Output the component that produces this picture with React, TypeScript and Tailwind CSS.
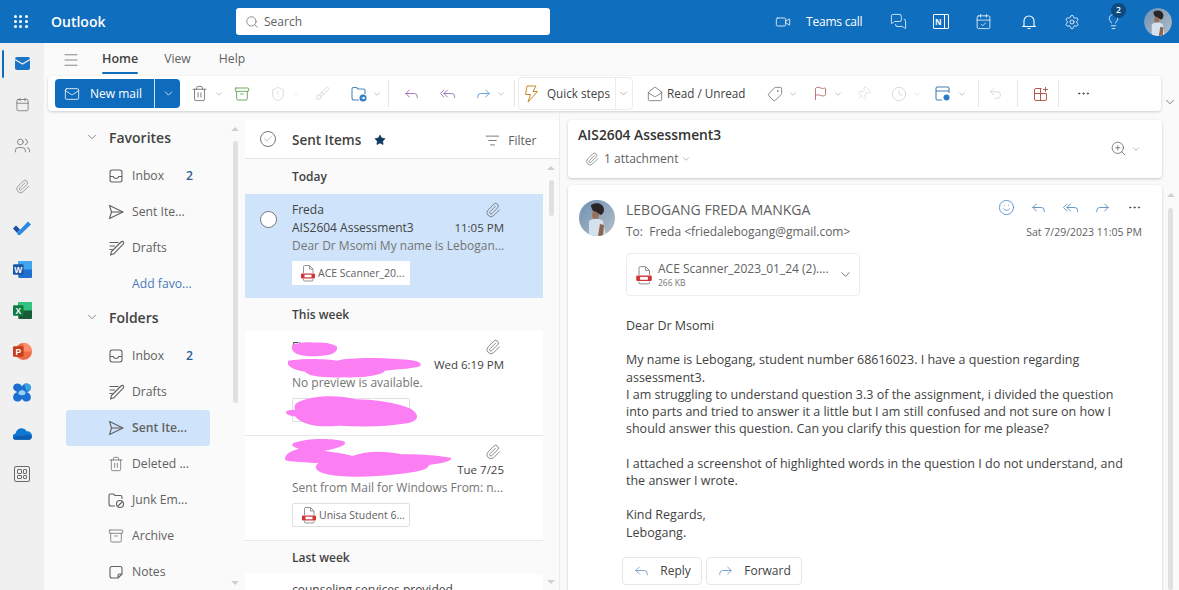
import type { ReactNode } from 'react';
import {
  Archive, Brush, CalendarCheck, ChevronDown, Clock, Ellipsis, Flag, Lightbulb, Mail,
  MailOpen, Menu, Paperclip, Pin, Reply, ReplyAll, Forward, Search, Settings, ShieldAlert, Smile, Star,
  Tag, Trash2, Undo2, Users, Video, Calendar, ZoomIn, Check, MessagesSquare, ListFilter,
} from 'lucide-react';

const Chev = ({ className = '', size = 12 }: { className?: string; size?: number }) => (
  <ChevronDown size={size} strokeWidth={1.4} className={`shrink-0 ${className}`} />
);

const SendIcon = () => (
  <svg width="18" height="18" viewBox="0 0 18 18" fill="none" stroke="#616161" strokeWidth="1.1" strokeLinejoin="round">
    <path d="M2.5 2.5 16 9 2.5 15.5 4.5 9Z" />
    <path d="M4.5 9H16" />
  </svg>
);

const InboxIcon = () => (
  <svg width="16" height="16" viewBox="0 0 16 16" fill="none" stroke="#616161" strokeWidth="1.1">
    <rect x="2" y="2" width="12" height="12" rx="2.2" />
    <path d="M2 8.5h3.2c.5 1.4 1.5 2 2.8 2s2.3-.6 2.8-2H14" />
  </svg>
);

const DraftIcon = () => (
  <svg width="18" height="18" viewBox="0 0 18 18" fill="none" stroke="#616161" strokeWidth="1.1" strokeLinejoin="round">
    <path d="M2.5 3.5h9M2.5 7h5.5M2.5 10.5h3M3.5 16l1-3.5L14 3c.8-.8 2-.8 2.5 0s.3 1.5-.3 2.2L6.8 14.8Z" />
  </svg>
);

const JunkIcon = () => (
  <svg width="18" height="18" viewBox="0 0 18 18" fill="none" stroke="#616161" strokeWidth="1.1">
    <path d="M8 15H4a2 2 0 0 1-2-2V4.500a1.500 1.500 0 0 1 1.500-1.500h3l1.500 1.500h5.500A1.500 1.500 0 0 1 15 6v2" />
    <circle cx="13" cy="13" r="3.500" />
    <path d="m10.500 15.500 5-5" />
  </svg>
);

const NoteIcon = () => (
  <svg width="16" height="16" viewBox="0 0 16 16" fill="none" stroke="#616161" strokeWidth="1.1" strokeLinejoin="round">
    <path d="M4 2.500h8a2 2 0 0 1 2 2V10l-4 4H4a2 2 0 0 1-2-2V4.500a2 2 0 0 1 2-2Z" />
    <path d="M14 10h-2.500A1.500 1.500 0 0 0 10 11.500V14" />
  </svg>
);

const MoveIcon = () => (
  <svg width="18" height="18" viewBox="0 0 18 18" fill="none" stroke="#4f86bd" strokeWidth="1.1">
    <path d="M9 15H4a2 2 0 0 1-2-2V4a1.500 1.500 0 0 1 1.500-1.500h3L8 4h5.500A1.500 1.500 0 0 1 15 5.500V9" />
    <circle cx="13" cy="13" r="3.500" fill="#2b7cc4" stroke="none" />
    <path d="M11.500 13h3m-1.200-1.200 1.200 1.200-1.200 1.200" stroke="#fff" />
  </svg>
);

const PdfIcon = ({ big = false }: { big?: boolean }) => (
  <svg width={big ? 18 : 16} height={big ? 20 : 18} viewBox="0 0 16 18" fill="none" className="shrink-0">
    <path d="M3.500 9V2.500A1 1 0 0 1 4.500 1.500h5l3.500 3.500v4M3.500 15v1a1 1 0 0 0 1 1h7.500a1 1 0 0 0 1-1v-1" stroke="#8a8a8a" strokeWidth="0.9" />
    <path d="M9.500 1.500V5H13" stroke="#8a8a8a" strokeWidth="0.9" />
    <rect x="1" y="9.500" width="14" height="5" rx="1" fill="#d13438" />
    <rect x="4.500" y="10.700" width="7" height="2.600" fill="#fff" />
  </svg>
);

const Avatar = ({ size }: { size: number }) => (
  <svg width={size} height={size} viewBox="0 0 36 36" className="shrink-0">
    <defs>
      <linearGradient id={`av${size}`} x1="0" y1="0" x2="1" y2="1">
        <stop offset="0" stopColor="#6f90b3" />
        <stop offset="1" stopColor="#b4bfc6" />
      </linearGradient>
      <clipPath id={`cl${size}`}>
        <circle cx="18" cy="18" r="18" />
      </clipPath>
    </defs>
    <g clipPath={`url(#cl${size})`}>
      <rect width="36" height="36" fill={`url(#av${size})`} />
      <path d="M12 5c5-3 12-2 13 4 0 3-1 5-3 6-2-2-5-1-6-2s-4-4-4-8Z" fill="#2a2626" />
      <path d="M14 11c2 0 5 1 6 4l-1 5h-4l-2-4Z" fill="#9a7058" />
      <path d="M10 21c4-3 11-3 14 0l3 15H10Z" fill="#d5e2ee" />
      <path d="M21 24l4 1-1 11h-5Z" fill="#8b664f" />
    </g>
  </svg>
);

const OfficeTile = ({ letter, from, to, fold }: { letter: string; from: string; to: string; fold: string }) => (
  <svg width="19" height="19" viewBox="0 0 18 18">
    <rect x="5" y="1" width="13" height="16" rx="1" fill={to} />
    <rect x="5" y="1" width="13" height="8" rx="1" fill={fold} />
    <rect x="0" y="4" width="10" height="10" rx="1" fill={from} />
    <text x="5" y="12" textAnchor="middle" fontSize="8" fontWeight="700" fill="#fff" fontFamily="Liberation Sans">{letter}</text>
  </svg>
);

const RailItem = ({ children, active = false }: { children: ReactNode; active?: boolean }) => (
  <div className="relative flex h-[41.1px] w-[44px] items-center justify-center">
    {active && <span className="absolute left-[2px] top-[7px] h-[28px] w-[2px] rounded bg-[#0f6cbd]" />}
    {children}
  </div>
);

const Rail = () => (
  <div className="flex w-[44px] shrink-0 flex-col bg-[#f0f0f0]">
    <RailItem active>
      <div className="flex h-[13px] w-[15px] items-center justify-center rounded-[2px] bg-[#1a73c4]">
        <svg width="15" height="13" viewBox="0 0 15 13" fill="none" stroke="#f0f0f0" strokeWidth="1.100"><path d="m0 2.500 7.500 4.500L15 2.500" /></svg>
      </div>
    </RailItem>
    <RailItem><Calendar size={15} strokeWidth={1.2} className="text-[#6b6b6b]" /></RailItem>
    <RailItem><Users size={17} strokeWidth={1.1} className="text-[#6b6b6b]" /></RailItem>
    <RailItem><Paperclip size={15} strokeWidth={1.1} className="text-[#7a7a7a]" /></RailItem>
    <RailItem>
      <svg width="18" height="14" viewBox="0 0 18 14">
        <path d="M0 7.500 3 4.500l4 4-3 3.500Z" fill="#1c4fa5" />
        <path d="M4 12 15 0.500 18 3.500 7 14c-1 .8-2 .8-3-2Z" fill="#2a8ae0" />
      </svg>
    </RailItem>
    <RailItem><OfficeTile letter="W" from="#1a55a8" to="#1f6fd0" fold="#41a5ee" /></RailItem>
    <RailItem><OfficeTile letter="X" from="#107c41" to="#185c37" fold="#33c481" /></RailItem>
    <RailItem>
      <svg width="19" height="19" viewBox="0 0 18 18">
        <circle cx="10" cy="9" r="8" fill="#ed6c47" />
        <path d="M10 1a8 8 0 0 1 8 8h-8Z" fill="#ff8f6b" />
        <rect x="0" y="4" width="10" height="10" rx="1" fill="#c43e1c" />
        <text x="5" y="12" textAnchor="middle" fontSize="8" fontWeight="700" fill="#fff" fontFamily="Liberation Sans">P</text>
      </svg>
    </RailItem>
    <RailItem>
      <svg width="20" height="20" viewBox="0 0 18 18">
        <path d="M1 5c0-4 6-5 8-1 2-4 8-3 8 1s-4 4-4 4 4 1 4 5-6 5-8 1c-2 4-8 3-8-1s4-5 4-5-4-1-4-4Z" fill="#1b6fd1" />
        <path d="M6 9c1-2 5-2 6 0s-1 3-3 3-4-1-3-3Z" fill="#9ad0f5" />
        <path d="M11 1.500c3-.5 6 1 6 3.500 0 2-2 3-4 3Z" fill="#35a4e8" />
      </svg>
    </RailItem>
    <RailItem>
      <svg width="19" height="13" viewBox="0 0 18 12">
        <path d="M3 12a3 3 0 0 1-.5-6C3 3 5.500 1 8 1c2 0 4 1 5 3 3-.5 5 2 5 4.500 0 2-1.500 3.500-3.500 3.500Z" fill="#0f78d4" />
        <path d="M0 9.500A3 3 0 0 0 3 12h11.500C16 12 18 10.500 18 8.500c-3-2-6-2-9 0-2-1-6-1-9 1Z" fill="#0a5fb4" />
      </svg>
    </RailItem>
    <RailItem>
      <div className="grid h-[16px] w-[16px] grid-cols-2 gap-[1px] rounded-[2px] border border-[#6b6b6b] p-[2px]">
        <span className="rounded-[1px] border border-[#6b6b6b]" />
        <span className="rounded-[1px] border border-[#6b6b6b]" />
        <span className="rounded-[1px] border border-[#6b6b6b]" />
        <span className="rounded-[1px] border border-[#6b6b6b]" />
      </div>
    </RailItem>
  </div>
);

const Header = () => (
  <div className="flex h-[43px] shrink-0 items-center bg-[#106ebe] text-white">
    <div className="ml-[14px] grid h-[14px] w-[14px] grid-cols-3 gap-[2px]">
      {[0, 1, 2, 3, 4, 5, 6, 7, 8].map((d) => <span key={d} className="h-[3px] w-[3px] rounded-full bg-white" />)}
    </div>
    <span className="ml-[23px] w-[53px] whitespace-nowrap text-[14px] font-semibold">Outlook</span>
    <div className="ml-[132px] flex h-[27px] w-[314px] items-center rounded-[3px] bg-white pl-[9px] text-[12px] text-[#616161]">
      <Search size={14} strokeWidth={1.2} />
      <span className="ml-[5px]">Search</span>
    </div>
    <Video size={16} strokeWidth={1.2} className="ml-[225px]" />
    <span className="ml-[15px] w-[57px] whitespace-nowrap text-[12px] tracking-[-0.2px]">Teams call</span>
    <MessagesSquare size={17} strokeWidth={1.1} className="ml-[27px]" />
    <div className="ml-[26px] flex h-[15px] w-[16px] items-center rounded-[1px] border border-white pl-[1px] text-[8px] font-bold leading-none">
      N<span className="ml-[2px] h-full w-px bg-white" />
    </div>
    <CalendarCheck size={17} strokeWidth={1.1} className="ml-[26px]" />
    <svg width="16" height="16" viewBox="0 0 16 16" fill="none" stroke="white" strokeWidth="1.100" className="ml-[29px]">
      <path d="M3 11.500V7a5 5 0 0 1 10 0v4.500l1 1H2ZM6.500 14.500h3" />
    </svg>
    <Settings size={16} strokeWidth={1.2} className="ml-[27px]" />
    <div className="relative ml-[25px]">
      <Lightbulb size={17} strokeWidth={1.1} />
      <span className="absolute left-[6px] top-[-10px] flex h-[15px] w-[15px] items-center justify-center rounded-full bg-[#0c4a80] text-[8.5px] font-semibold">2</span>
    </div>
    <div className="ml-[22px] overflow-hidden rounded-full"><Avatar size={28} /></div>
  </div>
);

const Divider = ({ className = '' }: { className?: string }) => (
  <span className={`h-[27px] w-px shrink-0 bg-[#e6e6e6] ${className}`} />
);

const TabsRow = () => (
  <div className="flex h-[33px] shrink-0 items-center text-[12.2px] text-[#616161]">
    <Menu size={18} strokeWidth={1} className="ml-[18px] text-[#616161]" />
    <div className="relative ml-[22px] text-[12.5px] font-semibold text-[#424242]">
      Home
      <span className="absolute left-0 top-[22px] h-[2px] w-full rounded bg-[#0f6cbd]" />
    </div>
    <span className="ml-[26px]">View</span>
    <span className="ml-[28px]">Help</span>
  </div>
);

const Toolbar = () => (
  <div className="flex h-[35px] shrink-0">
    <div className="ml-[4px] flex w-[1113px] items-center rounded-[4px] bg-white text-[11.7px] text-[#424242] shadow-[0_1px_3px_rgba(0,0,0,0.18)]">
      <div className="ml-[7px] flex h-[29px] w-[125px] shrink-0 items-center rounded-[4px] bg-[#0f6cbd] text-white">
        <Mail size={16} strokeWidth={1.2} className="ml-[9px]" />
        <span className="ml-[10px] text-[12px] font-medium">New mail</span>
        <span className="ml-[12px] h-full w-px bg-white/80" />
        <Chev className="ml-[7px]" size={13} />
      </div>
      <Trash2 size={17} strokeWidth={1.1} className="ml-[11px] text-[#616161]" />
      <Chev className="ml-[6px] text-[#9a9a9a]" size={10} />
      <Archive size={16} strokeWidth={1.3} className="ml-[10px] text-[#5e9b4a]" />
      <ShieldAlert size={16} strokeWidth={1} className="ml-[20px] text-[#c8c8c8]" />
      <Chev className="ml-[5px] text-[#dddddd]" size={10} />
      <Brush size={15} strokeWidth={1} className="ml-[14px] text-[#c4c4c4]" />
      <div className="ml-[20px]"><MoveIcon /></div>
      <Chev className="ml-[4px] text-[#9a9a9a]" size={10} />
      <Divider className="ml-[6px]" />
      <Reply size={17} strokeWidth={1.3} className="ml-[14px] text-[#a46bb4]" />
      <ReplyAll size={17} strokeWidth={1.3} className="ml-[19px] text-[#9273bd]" />
      <Forward size={17} strokeWidth={1.3} className="ml-[19px] text-[#5c9bd8]" />
      <Chev className="ml-[4px] text-[#9a9a9a]" size={10} />
      <Divider className="ml-[8px]" />
      <div className="ml-[3px] flex h-[33px] w-[115px] shrink-0 items-center rounded-[4px] border border-[#ececec]">
        <svg width="15" height="18" viewBox="0 0 15 18" fill="none" stroke="#c98a2e" strokeWidth="1" strokeLinejoin="round" className="ml-[5px]">
          <path d="M3 1h9L9 6.500h4.500L4 17l2.500-7.500H1.500Z" />
        </svg>
        <span className="ml-[8px] whitespace-nowrap">Quick steps</span>
        <span className="ml-[5px] h-full w-px bg-[#ececec]" />
        <Chev className="ml-[2px] text-[#8a8a8a]" size={11} />
      </div>
      <MailOpen size={16} strokeWidth={1.1} className="ml-[14px] text-[#616161]" />
      <span className="ml-[4px] w-[80px] whitespace-nowrap">Read / Unread</span>
      <Tag size={16} strokeWidth={1.1} className="ml-[20px] scale-x-[-1] text-[#616161]" />
      <Chev className="ml-[5px] text-[#9a9a9a]" size={10} />
      <Flag size={15} strokeWidth={1.2} className="ml-[15px] text-[#a6544e]" />
      <Chev className="ml-[5px] text-[#9a9a9a]" size={10} />
      <Pin size={15} strokeWidth={1} className="ml-[13px] rotate-45 text-[#c5d5e8]" />
      <Clock size={16} strokeWidth={1} className="ml-[20px] text-[#c8c8c8]" />
      <Chev className="ml-[5px] text-[#dddddd]" size={10} />
      <svg width="17" height="17" viewBox="0 0 17 17" fill="none" stroke="#4b7fb5" strokeWidth="1.100" className="ml-[12px]">
        <path d="M8 15H3.500A1.500 1.500 0 0 1 2 13.500v-10A1.500 1.500 0 0 1 3.500 2h10A1.500 1.500 0 0 1 15 3.500V8M2 6h13" />
        <circle cx="12.500" cy="12.500" r="3" fill="#2b7cc4" stroke="none" />
      </svg>
      <Chev className="ml-[6px] text-[#9a9a9a]" size={10} />
      <Divider className="ml-[11px]" />
      <Undo2 size={15} strokeWidth={1} className="ml-[9px] text-[#c8c8c8]" />
      <Divider className="ml-[14px]" />
      <svg width="16" height="16" viewBox="0 0 16 16" fill="none" stroke="#b8574e" strokeWidth="1" className="ml-[15px]">
        <path d="M8.500 2.500H3A1.500 1.500 0 0 0 1.500 4v9A1.500 1.500 0 0 0 3 14.500h9a1.500 1.500 0 0 0 1.500-1.500V7.500h-12M7.500 2.500v12M12.500 1v5M10 3.500h5" />
      </svg>
      <Divider className="ml-[9px]" />
      <Ellipsis size={15} strokeWidth={1.5} className="ml-[17px] text-[#424242]" />
    </div>
    <div className="flex flex-1 items-end justify-center pb-[2px]"><Chev className="text-[#616161]" size={14} /></div>
  </div>
);

const ScrollArrow = ({ up = false, className = '' }: { up?: boolean; className?: string }) => (
  <span className={`block h-0 w-0 border-x-[4px] border-x-transparent ${up ? 'border-b-[4px] border-b-[#d0d0d0]' : 'border-t-[4px] border-t-[#d0d0d0]'} ${className}`} />
);

const SectionRow = ({ label }: { label: string }) => (
  <div className="flex h-[36px] items-center pl-[41px] text-[14px] font-semibold text-[#424242]">
    <Chev className="text-[#707070]" size={14} />
    <span className="ml-[10px]">{label}</span>
  </div>
);

const FolderRow = ({ icon, label, count, selected = false }: { icon: ReactNode; label: string; count?: string; selected?: boolean }) => (
  <div className={`ml-[22px] flex h-[36px] w-[144px] items-center rounded-[3px] text-[12.2px] text-[#616161] ${selected ? 'bg-[#cfe4fa] font-semibold text-[#424242]' : ''}`}>
    <span className="ml-[40px] mr-[6px] flex w-[20px] shrink-0 justify-center">{icon}</span>
    <span className="whitespace-nowrap">{label}</span>
    {count && <span className="ml-auto mr-[17px] font-semibold text-[#2b5c91]">{count}</span>}
  </div>
);

const FolderPane = () => (
  <div className="relative flex w-[201px] shrink-0 pt-[8px]">
    <div className="w-[186px]">
      <div className="mb-[3px]"><SectionRow label="Favorites" /></div>
      <FolderRow icon={<InboxIcon />} label="Inbox" count="2" />
      <FolderRow icon={<SendIcon />} label="Sent Ite..." />
      <FolderRow icon={<DraftIcon />} label="Drafts" />
      <div className="flex h-[36px] items-center pl-[88px] text-[12.2px] text-[#4a7ab8]">Add favo...</div>
      <div className="-mt-[3px] mb-[3px]"><SectionRow label="Folders" /></div>
      <FolderRow icon={<InboxIcon />} label="Inbox" count="2" />
      <FolderRow icon={<DraftIcon />} label="Drafts" />
      <FolderRow icon={<SendIcon />} label="Sent Ite..." selected />
      <FolderRow icon={<Trash2 size={16} strokeWidth={1.1} className="text-[#616161]" />} label="Deleted ..." />
      <FolderRow icon={<JunkIcon />} label="Junk Em..." />
      <FolderRow icon={<Archive size={16} strokeWidth={1.1} className="text-[#616161]" />} label="Archive" />
      <FolderRow icon={<NoteIcon />} label="Notes" />
    </div>
    <div className="ml-[2px] flex w-[6px] flex-col items-center pt-[8px]">
      <ScrollArrow up />
      <span className="mt-[10px] h-[262px] w-[5px] rounded bg-[#e0e0e0]" />
    </div>
    <ScrollArrow className="absolute bottom-[5px] left-[187px]" />
  </div>
);

const ClipIcon = () => <Paperclip size={16} strokeWidth={1.1} className="mr-[3px] text-[#616161]" />;

const Chip = ({ label, selected = false }: { label: string; selected?: boolean }) => (
  <div className={`mt-[6px] flex h-[24px] w-[118px] items-center pl-[8px] text-[10.5px] text-[#616161] ${selected ? 'bg-white' : 'rounded-[2px] border border-[#e0e0e0] bg-white'}`}>
    <PdfIcon />
    <span className="ml-[2px] whitespace-nowrap">{label}</span>
  </div>
);

interface MailRowProps {
  sender: string;
  subject: string;
  time: string;
  preview: string;
  chip: string;
  selected?: boolean;
  children?: ReactNode;
}

const MailRow = ({ sender, subject, time, preview, chip, selected = false, children }: MailRowProps) => (
  <div className={`relative h-[104px] w-[298px] pl-[47px] pr-[39px] pt-[7px] text-[12px] leading-[18px] ${selected ? 'bg-[#cfe4fa]' : 'bg-white'}`}>
    {selected && <span className="absolute left-[15px] top-[17px] h-[17px] w-[17px] rounded-full border border-[#757575] bg-white" />}
    <div className="flex h-[18px] items-center justify-between text-[#424242]">
      <span>{sender}</span>
      <ClipIcon />
    </div>
    <div className="flex h-[18px] justify-between text-[#424242]">
      <span className="whitespace-nowrap">{subject}</span>
      <span className="whitespace-nowrap text-[11.5px]">{time}</span>
    </div>
    <div className="whitespace-nowrap text-[#757575]">{preview}</div>
    <Chip label={chip} selected={selected} />
    {children}
  </div>
);

const DayLabel = ({ label, h }: { label: string; h: string }) => (
  <div className={`flex items-center pl-[47px] pt-[1px] text-[12px] font-semibold text-[#424242] ${h}`}>{label}</div>
);

const Scribble = ({ d, className }: { d: string; className: string }) => (
  <svg viewBox="0 0 170 50" preserveAspectRatio="none" className={`absolute ${className}`}>
    <path d={d} fill="#fb7ff2" />
  </svg>
);

const MailList = () => (
  <div className="flex w-[315px] shrink-0 flex-col overflow-hidden border-r border-[#ececec] pt-[9px]">
    <div className="flex h-[39px] shrink-0 items-center border-b border-[#e6e6e6] bg-white">
      <span className="ml-[15px] flex h-[16px] w-[16px] items-center justify-center rounded-full border border-[#757575]">
        <Check size={10} strokeWidth={1.2} className="text-[#757575]" />
      </span>
      <span className="ml-[16px] mt-[2px] text-[13.5px] font-semibold text-[#424242]">Sent Items</span>
      <Star size={12} fill="#12395f" strokeWidth={1} className="ml-[13px] mt-[1px] text-[#12395f]" />
      <ListFilter size={15} strokeWidth={1.1} className="ml-[99px] mt-[3px] text-[#424242]" />
      <span className="ml-[8px] mt-[3px] text-[12px] text-[#616161]">Filter</span>
    </div>
    <div className="flex min-h-0 flex-1">
      <div className="w-[298px] overflow-hidden">
        <DayLabel label="Today" h="h-[35px]" />
        <MailRow selected sender="Freda" subject="AIS2604 Assessment3" time="11:05 PM" preview="Dear Dr Msomi My name is Lebogan..." chip="ACE Scanner_20..." />
        <DayLabel label="This week" h="h-[33px]" />
        <MailRow sender="Fi" subject="" time="Wed 6:19 PM" preview="No preview is available." chip="">
          <Scribble className="left-[47px] top-[11px] h-[15px] w-[46px]" d="M0 10C20 2 50-2 80 2c30-2 60 0 85 12 8 14-10 28-40 30-40 6-90 6-115-8C0 26-4 18 0 10Z" />
          <Scribble className="left-[43px] top-[26px] h-[23px] w-[135px]" d="M0 8C20 2 50 4 62 8 74 2 110 0 150 6c14 2 20 8 16 14-10 6-30 6-44 10-2 10-30 16-50 14C40 46 24 40 22 32 10 30-4 20 0 8Z" />
          <Scribble className="left-[41px] top-[63px] h-[33px] w-[132px]" d="M16 12C40 0 70 2 90 8c20 0 50 4 70 14 12 8 12 18-2 22-30 6-60 6-90 4-30 4-50-4-56-14C-2 32-6 24 12 24 10 20 10 16 16 12Z" />
        </MailRow>
        <div className="h-px w-[298px] bg-[#e8e8e8]" />
        <MailRow sender="" subject="" time="Tue 7/25" preview="Sent from Mail for Windows From: n..." chip="Unisa Student 6...">
          <Scribble className="left-[40px] top-[2px] h-[45px] w-[168px]" d="M8 6C20 0 50 0 60 4c4 4-8 8-20 10 6 2 20 3 28 6 14-6 34-6 50-2 14 0 30 0 50 4 2 4-10 6-22 8-2 6-14 8-30 10-30 4-60 4-74 0-10-2-14-8-8-12C4 26-2 26 0 22 2 16 8 14 14 12 8 10 6 8 8 6Z" />
        </MailRow>
        <div className="h-px w-[298px] bg-[#e8e8e8]" />
        <DayLabel label="Last week" h="h-[33px]" />
        <div className="h-[40px] bg-white pl-[47px] pt-[7px] text-[12px] leading-[18px] text-[#424242]">counseling services provided</div>
      </div>
      <div className="relative flex flex-1 flex-col items-center pt-[7px]">
        <ScrollArrow up />
        <span className="mt-[10px] h-[36px] w-[5px] rounded bg-[#e0e0e0]" />
        <ScrollArrow className="absolute bottom-[6px]" />
      </div>
    </div>
  </div>
);

const BodyLines = ({ lines }: { lines: string[] }) => (
  <div className="mb-[17px]">
    {lines.map((l) => <div key={l} className="h-[17.3px] whitespace-nowrap">{l}</div>)}
  </div>
);

const ActionButton = ({ icon, label, w }: { icon: ReactNode; label: string; w: string }) => (
  <div className={`flex h-[28px] items-center justify-center gap-[10px] rounded-[4px] border border-[#e6e6e6] bg-white text-[12px] text-[#424242] ${w}`}>
    {icon}
    <span>{label}</span>
  </div>
);

const ReadingPane = () => (
  <div className="ml-[8px] flex w-[594px] shrink-0 flex-col pt-[9px]">
    <div className="relative flex h-[58px] shrink-0 flex-col rounded-[4px] bg-white px-[10px] shadow-[0_1px_3px_rgba(0,0,0,0.2)]">
      <div className="mt-[5px] text-[13.8px] font-semibold leading-[20px] text-[#333]">AIS2604 Assessment3</div>
      <div className="mt-[5px] flex items-center text-[12px] text-[#616161]">
        <Paperclip size={14} strokeWidth={1.1} className="ml-[7px]" />
        <span className="ml-[5px]">1 attachment</span>
        <Chev className="ml-[3px] text-[#8a8a8a]" size={10} />
      </div>
      <div className="absolute right-[21px] top-[20px] flex items-center gap-[4px] text-[#616161]">
        <ZoomIn size={17} strokeWidth={1.1} />
        <Chev className="text-[#8a8a8a]" size={10} />
      </div>
    </div>
    <div className="relative mt-[7px] flex-1 rounded-t-[4px] bg-white pl-[58px] shadow-[0_1px_3px_rgba(0,0,0,0.2)]">
      <div className="absolute left-[11px] top-[15px]"><Avatar size={36} /></div>
      <div className="pt-[15px] text-[14px] leading-[20px] text-[#616161]">LEBOGANG FREDA MANKGA</div>
      <div className="mt-[3px] text-[12px] leading-[18px] text-[#616161]">To:&nbsp; Freda &lt;friedalebogang@gmail.com&gt;</div>
      <div className="absolute right-[20px] top-[38px] text-[10.500px] leading-[18px] text-[#616161]">Sat 7/29/2023 11:05 PM</div>
      <div className="absolute right-[20px] top-[14px] flex items-center">
        <Smile size={17} strokeWidth={1.1} className="text-[#3f7fc0]" />
        <Reply size={17} strokeWidth={1.3} className="ml-[15px] text-[#5c8fc0]" />
        <ReplyAll size={17} strokeWidth={1.3} className="ml-[15px] text-[#5c8fc0]" />
        <Forward size={17} strokeWidth={1.3} className="ml-[15px] text-[#5c8fc0]" />
        <Ellipsis size={15} strokeWidth={1.4} className="ml-[16px] text-[#424242]" />
      </div>
      <div className="mt-[12px] flex h-[43px] w-[234px] items-center rounded-[4px] border border-[#ececec] pl-[8px]">
        <PdfIcon big />
        <div className="ml-[5px] w-[179px]">
          <div className="whitespace-nowrap text-[12px] leading-[16px] text-[#616161]">ACE Scanner_2023_01_24 (2)....</div>
          <div className="text-[8.5px] leading-[11px] text-[#757575]">266 KB</div>
        </div>
        <Chev className="ml-[1px] text-[#616161]" size={15} />
      </div>
      <div className="mt-[21px] text-[12.500px] leading-[17.300px] text-[#424242]">
        <BodyLines lines={['Dear Dr Msomi']} />
        <BodyLines lines={['My name is Lebogang, student number 68616023. I have a question regarding', 'assessment3.', 'I am struggling to understand question 3.3 of the assignment, i divided the question', 'into parts and tried to answer it a little but I am still confused and not sure on how I', 'should answer this question. Can you clarify this question for me please?']} />
        <BodyLines lines={['I attached a screenshot of highlighted words in the question I do not understand, and', 'the answer I wrote.']} />
        <BodyLines lines={['Kind Regards,', 'Lebogang.']} />
      </div>
      <div className="-ml-[4px] -mt-[1px] flex gap-[4px]">
        <ActionButton w="w-[80px]" label="Reply" icon={<Reply size={17} strokeWidth={1.1} className="text-[#5c8fc0]" />} />
        <ActionButton w="w-[96px]" label="Forward" icon={<Forward size={17} strokeWidth={1.1} className="text-[#5c8fc0]" />} />
      </div>
    </div>
  </div>
);

const App = () => (
  <div className="flex h-[590px] w-[1179px] flex-col overflow-hidden bg-[#fafafa] font-['Open_Sans','Noto_Sans',sans-serif]">
    <Header />
    <div className="flex min-h-0 flex-1 overflow-hidden">
      <Rail />
      <div className="flex min-h-0 flex-1 flex-col overflow-hidden">
        <TabsRow />
        <Toolbar />
        <div className="flex min-h-0 flex-1 overflow-hidden">
          <FolderPane />
          <MailList />
          <ReadingPane />
          <div className="flex flex-1 flex-col items-center pt-[82px]">
            <ScrollArrow up />
            <span className="mt-[11px] h-[400px] w-[5px] rounded bg-[#e0e0e0]" />
          </div>
        </div>
      </div>
    </div>
  </div>
);

export default App;
